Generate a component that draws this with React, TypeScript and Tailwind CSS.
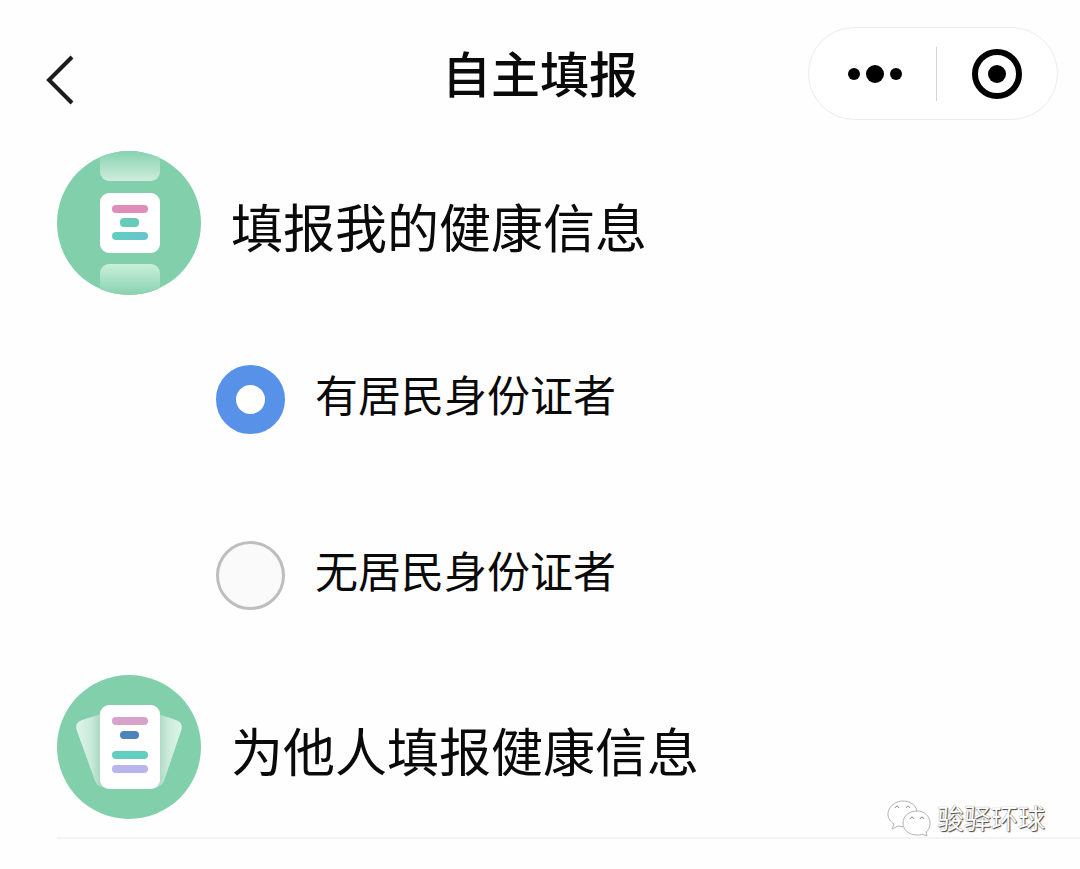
import { useState } from "react";
import type { ReactNode } from "react";

const OPTIONS = [
  { value: "with-id", label: "有居民身份证者" },
  { value: "without-id", label: "无居民身份证者" },
];

function SelfIcon() {
  return (
    <svg viewBox="0 0 144 144" className="size-36 shrink-0" aria-hidden="true">
      <defs>
        <clipPath id="self-clip">
          <circle cx="72" cy="72" r="72" />
        </clipPath>
        <linearGradient id="self-top" x1="0" y1="0" x2="0" y2="1">
          <stop offset="0.3" stopColor="#8bd4b3" />
          <stop offset="1" stopColor="#d0ecdd" />
        </linearGradient>
        <linearGradient id="self-bottom" x1="0" y1="0" x2="0" y2="1">
          <stop offset="0" stopColor="#c9f0dc" />
          <stop offset="0.8" stopColor="#84cfac" />
        </linearGradient>
        <linearGradient id="self-line" x1="0" y1="0" x2="1" y2="0">
          <stop offset="0" stopColor="#62cfc0" />
          <stop offset="1" stopColor="#66c4d2" />
        </linearGradient>
      </defs>
      <g clipPath="url(#self-clip)">
        <rect width="144" height="144" fill="#81cfab" />
        <rect x="43" y="-10" width="60" height="40" rx="9" fill="url(#self-top)" />
        <rect x="43" y="113" width="60" height="41" rx="9" fill="url(#self-bottom)" />
      </g>
      <rect x="43" y="42" width="60" height="60" rx="9" fill="#fff" />
      <rect x="55" y="54" width="36" height="8" rx="4" fill="#e08dba" />
      <rect x="63" y="67" width="19" height="9" rx="4" fill="#67cbb9" />
      <rect x="55" y="81" width="36" height="8" rx="4" fill="url(#self-line)" />
    </svg>
  );
}

function OthersIcon() {
  return (
    <svg viewBox="0 0 144 144" className="size-36 shrink-0" aria-hidden="true">
      <defs>
        <linearGradient id="card-left" x1="0" y1="0" x2="1" y2="0">
          <stop offset="0" stopColor="#dff5ea" />
          <stop offset="0.35" stopColor="#cbeadb" />
          <stop offset="0.65" stopColor="#a3d5bd" />
        </linearGradient>
        <linearGradient id="card-right" x1="1" y1="0" x2="0" y2="0">
          <stop offset="0" stopColor="#dff5ea" />
          <stop offset="0.35" stopColor="#cbeadb" />
          <stop offset="0.65" stopColor="#a3d5bd" />
        </linearGradient>
      </defs>
      <circle cx="72" cy="72" r="72" fill="#81cfab" />
      <path
        d="M50 37 L25 45 Q17 48 20 56 L38 106 Q41 113 49 113 H60 V37Z"
        fill="url(#card-left)"
      />
      <path
        d="M95 37 L119 45 Q127 48 124 56 L107 106 Q104 113 96 113 H86 V37Z"
        fill="url(#card-right)"
      />
      <rect x="43" y="30" width="60" height="84" rx="9" fill="#fff" />
      <rect x="55" y="42" width="36" height="8" rx="4" fill="#d6a2c8" />
      <rect x="63" y="56" width="19" height="8" rx="4" fill="#4d83bd" />
      <rect x="55" y="76" width="36" height="8" rx="4" fill="#63cdc0" />
      <rect x="55" y="90" width="36" height="8" rx="4" fill="#b8b4ee" />
    </svg>
  );
}

function WechatMark() {
  return (
    <svg
      viewBox="0 0 44 38"
      className="h-[38px] w-11"
      fill="#fff"
      stroke="#b4b4b4"
      strokeWidth="1"
      strokeLinejoin="round"
      aria-hidden="true"
    >
      <path d="M16 2C8 2 1 8 1 15c0 5 3 8 6 10l-2 5 6-3c4 1 8 1 11-1 4-2 8-6 8-12C30 7 24 2 16 2Z" />
      <path d="M30 12c-8 0-14 5-14 12s6 12 14 12c2 0 4 0 5-1l5 2-1-4c3-2 4-5 4-9 0-7-6-12-13-12Z" />
      <path
        d="M8 9q2-4 4 0M19 9q2-4 4 0M23 20q2-4 4 0M33 20q2-4 4 0"
        fill="none"
        stroke="#8c8c8c"
      />
    </svg>
  );
}

function Entry({ icon, title }: { icon: ReactNode; title: string }) {
  return (
    <button
      type="button"
      className="flex w-full items-center gap-[30px] text-left"
    >
      {icon}
      <span className="pt-1.5 text-[52px] leading-[60px]">{title}</span>
    </button>
  );
}

export default function App() {
  const [identity, setIdentity] = useState("with-id");

  return (
    <div className="min-h-screen bg-[#fefefe] pb-7 font-['Noto_Sans_CJK_SC',sans-serif] text-[#0a0a0a]">

      {/* NAV BAR */}

      <header className="grid grid-cols-[1fr_auto_1fr] items-center px-[22px] pt-[27px] pb-[31px]">

        <button
          type="button"
          aria-label="返回"
          className="justify-self-start pt-3 pl-6"
        >
          <svg viewBox="0 0 28 50" className="h-[50px] w-7" aria-hidden="true">
            <path
              d="M26 2 L3 25 L26 48"
              fill="none"
              stroke="#1c1c1c"
              strokeWidth="4"
            />
          </svg>
        </button>

        <h1 className="pb-1 text-[49px] leading-[60px] font-medium">自主填报</h1>

        <div className="flex h-[93px] w-[250px] items-center justify-self-end rounded-full border border-[#ececec] bg-white">
          <button
            type="button"
            aria-label="更多"
            className="flex flex-1 items-center justify-center gap-[6px] pl-1.5"
          >
            <span className="size-3 rounded-full bg-black" />
            <span className="size-[18px] rounded-full bg-black" />
            <span className="size-3 rounded-full bg-black" />
          </button>
          <span className="h-[54px] w-px bg-[#d4d4d4]" />
          <button
            type="button"
            aria-label="关闭"
            className="flex flex-1 items-center justify-center"
          >
            <span className="flex size-[50px] items-center justify-center rounded-full border-6 border-black">
              <span className="size-[18px] rounded-full bg-black" />
            </span>
          </button>
        </div>

      </header>

      <main className="pl-[57px]">

        <Entry icon={<SelfIcon />} title="填报我的健康信息" />

        {/* ID TYPE */}

        <fieldset aria-label="证件类型" className="pt-4 pb-3 pl-[159px]">

          {OPTIONS.map((option) => (
            <label
              key={option.value}
              className="flex h-44 items-center gap-[30px] text-[43px] leading-[60px]"
            >
              <input
                type="radio"
                name="identity"
                value={option.value}
                checked={identity === option.value}
                onChange={() => setIdentity(option.value)}
                className="size-[69px] shrink-0 appearance-none rounded-full border-3 border-[#bebebe] bg-[#fafafa] checked:border-[20px] checked:border-[#5892e8] checked:bg-white"
              />
              <span className="pb-3">{option.label}</span>
            </label>
          ))}

        </fieldset>

        <div className="relative border-b-2 border-[#f4f4f4] pb-[18px]">
          <Entry icon={<OthersIcon />} title="为他人填报健康信息" />

          <div className="absolute right-[35px] bottom-0 flex items-center gap-[6px]">
            <WechatMark />
            <span className="text-[27px] leading-[38px] text-white [text-shadow:1px_1px_1px_#444,0_0_1px_#666]">
              骏驿环球
            </span>
          </div>
        </div>

      </main>

    </div>
  );
}
